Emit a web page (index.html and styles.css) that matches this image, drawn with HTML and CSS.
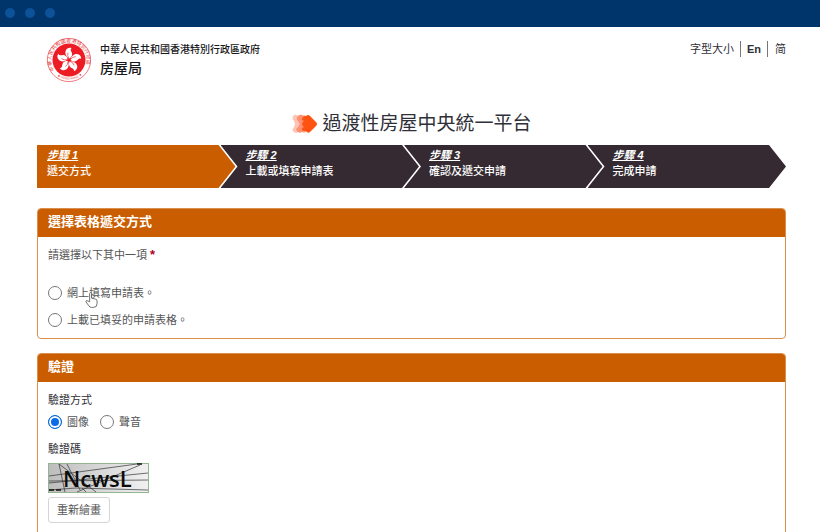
FILE: index.html
```html
<!DOCTYPE html>
<html lang="zh-Hant-HK">
<head>
<meta charset="utf-8">
<meta name="viewport" content="width=device-width, initial-scale=1">
<title>過渡性房屋中央統一平台</title>
<link rel="stylesheet" href="styles.css">
</head>
<body>
<div class="window">
  <div class="titlebar"><span class="dot"></span><span class="dot"></span><span class="dot"></span></div>
  <header class="header">
    <a class="brand" href="#">
      <svg class="emblem" viewBox="0 0 46 46" aria-hidden="true">
        <defs>
          <path id="ring-top" d="M8.500 33A17.600 17.600 0 1 1 37.500 33"/>
          <path id="ring-bottom" d="M9 37A20.500 20.500 0 0 0 37 37"/>
          <path id="petal" d="M23 21.500C20 20 18 17 19 13.800C19.800 11.500 22 10.200 24.500 10.800C23.400 12.200 23.800 13.300 24.800 14.800C26.400 17.200 25.600 20 23 21.500Z"/>
        </defs>
        <circle cx="23" cy="23" r="21.600" fill="#fff" stroke="#ee5b5e" stroke-width=".8"/>
        <text class="ring-text"><textPath href="#ring-top">中華人民共和國香港特別行政區</textPath></text>
        <text class="ring-text ring-latin"><textPath href="#ring-bottom" startOffset="3">★ HONG KONG ★</textPath></text>
        <circle cx="23" cy="23" r="16.500" fill="#ed1c24"/>
        <g fill="#fff">
          <use href="#petal" transform="rotate(5 23 23)"/>
          <use href="#petal" transform="rotate(77 23 23)"/>
          <use href="#petal" transform="rotate(149 23 23)"/>
          <use href="#petal" transform="rotate(221 23 23)"/>
          <use href="#petal" transform="rotate(293 23 23)"/>
        </g>
        <g fill="none" stroke="#ed1c24" stroke-width=".6">
          <path id="vein" d="M23 21.500Q20.800 18.500 22 15.500"/>
          <use href="#vein" transform="rotate(72 23 23)"/>
          <use href="#vein" transform="rotate(144 23 23)"/>
          <use href="#vein" transform="rotate(216 23 23)"/>
          <use href="#vein" transform="rotate(288 23 23)"/>
        </g>
      </svg>
      <span class="brand-text"><span class="government">中華人民共和國香港特別行政區政府</span><span class="bureau">房屋局</span></span>
    </a>
    <nav class="tools">
      <a href="#">字型大小</a><a class="lang-en" href="#">En</a><a href="#">简</a>
    </nav>
  </header>
  <main class="main">
    <h1 class="title">
      <svg class="title-icon" viewBox="0 0 26 20" aria-hidden="true">
        <path d="M3 1Q5 0 7 2L11 1Q13 0 15 2L18 6V14L15 18Q13 20 11 18L7 18Q5 20 3 18Q0 16 3 13L4 10L3 7Q0 4 3 1Z" fill="#ffc5b4"/>
        <path d="M8 1Q10 0 12 2L16 2Q18 1 20 3L23 10L19 17Q17 19 14 17L11 18Q8 20 6 17Q4 15 7 13L9 10L7 7Q4 4 8 1Z" fill="#ff9274"/>
        <path d="M15 2Q17 0 19 2L25 8Q27 10 25 12L19 18Q17 20 15 17Q11 18 11 14L13 13Q9 10 13 7L11 6Q11 2 15 2Z" fill="#ff5312"/>
      </svg>
      過渡性房屋中央統一平台
    </h1>
    <ol class="steps">
      <li class="step current"><span class="step-number">步驟 1</span><span>遞交方式</span></li>
      <li class="step"><span class="step-number">步驟 2</span><span>上載或填寫申請表</span></li>
      <li class="step"><span class="step-number">步驟 3</span><span>確認及遞交申請</span></li>
      <li class="step"><span class="step-number">步驟 4</span><span>完成申請</span></li>
    </ol>
    <section class="card">
      <h2 class="card-title">選擇表格遞交方式</h2>
      <fieldset class="card-body methods">
        <legend class="prompt">請選擇以下其中一項 <b class="required">*</b></legend>
        <label class="option hovered"><input type="radio" name="method">網上填寫申請表。
          <svg class="pointer" viewBox="0 0 14 18" aria-hidden="true"><path d="M5 11V2Q5 1 6 1T7 2V7L11 8Q13 8 13 10V13Q13 17 9 17H7Q5 17 4 15L1 11Q1 9 3 10Z" fill="#fff" stroke="#666" stroke-linejoin="round"/></svg>
        </label>
        <label class="option"><input type="radio" name="method">上載已填妥的申請表格。</label>
      </fieldset>
    </section>
    <section class="card">
      <h2 class="card-title">驗證</h2>
      <div class="card-body verify">
        <fieldset class="choices">
          <legend class="field-label">驗證方式</legend>
          <label class="option"><input type="radio" name="verify" checked>圖像</label>
          <label class="option"><input type="radio" name="verify">聲音</label>
        </fieldset>
        <div class="field-label">驗證碼</div>
        <svg class="captcha" viewBox="0 0 101 30" role="img" aria-label="NcwsL">
          <defs><linearGradient id="shade"><stop offset="0" stop-color="#bdbdbd"/><stop offset="1" stop-color="#f1f1f1"/></linearGradient></defs>
          <rect x=".5" y=".5" width="100" height="29" fill="url(#shade)" stroke="#91b691"/>
          <g fill="none" stroke="#333" stroke-width=".7">
            <path d="M1 13L89 1M1 20L100 10M1 18L100 17M1 27L28 25L100 27M11 1L17 29M19 1L32 27M11 1L48 29M29 29L92 2M34 25L38 29"/>
            <path d="M1 27H15M89 1H95" stroke="#111" stroke-width="1.500" stroke-dasharray="5 2"/>
          </g>
          <text class="captcha-text" x="15" y="24">NcwsL</text>
        </svg>
        <button class="redraw" type="button">重新繪畫</button>
      </div>
    </section>
  </main>
</div>
</body>
</html>
```
FILE: styles.css
```css
* { box-sizing: border-box; }
body {
  margin: 0;
  background: #fff;
  color: #303038;
  font: 11px/16px "Liberation Sans", "Noto Sans CJK TC", sans-serif;
}
a { color: inherit; text-decoration: none; }
.window { height: 100vh; overflow: hidden; }
.titlebar {
  display: flex;
  align-items: center;
  gap: 10px;
  height: 27px;
  padding: 0 5px 2px;
  background: #00356b;
}
.dot { width: 10px; height: 10px; border-radius: 50%; background: #0b5299; }
.header {
  display: flex;
  justify-content: space-between;
  align-items: flex-start;
  padding: 10px 34px 0 46px;
}
.brand { display: flex; gap: 8px; }
.emblem { width: 46px; height: 46px; }
.ring-text { fill: #e83a3e; font-size: 5px; }
.ring-latin { font-size: 3px; }
.brand-text { display: flex; flex-direction: column; padding-top: 5px; color: #18181c; }
.government { font-size: 10px; font-weight: 500; }
.bureau { font-size: 14px; line-height: 20px; font-weight: 500; }
.tools { display: flex; padding-top: 4px; }
.tools a { padding: 0 6px; }
.tools a + a { border-left: 1px solid #777; }
.tools a:last-child { padding: 0 0 0 7px; }
.lang-en { font-weight: bold; }
.main { padding: 0 34px 0 37px; }
.title {
  display: flex;
  justify-content: center;
  align-items: center;
  gap: 5px;
  margin: 27px 0 7px;
  font-size: 19px;
  line-height: 28px;
  font-weight: 400;
}
.title-icon { width: 26px; height: 20px; }
.steps {
  display: flex;
  margin: 0 0 20px;
  padding: 0;
  list-style: none;
}
.step {
  flex: 1 1 25%;
  display: flex;
  flex-direction: column;
  padding: 2px 20px 9px 25px;
  background: #352a31;
  color: #fff;
  font-weight: 500;
  clip-path: polygon(0 0, calc(100% - 17px) 0, 100% 50%, calc(100% - 17px) 100%, 0 100%, 17px 50%);
}
.step + .step { margin-left: -15px; }
.step.current {
  padding-left: 10px;
  background: #ca5d00;
  clip-path: polygon(0 0, calc(100% - 17px) 0, 100% 50%, calc(100% - 17px) 100%, 0 100%);
}
.step-number { font-weight: bold; font-style: italic; text-decoration: underline; }
.card {
  margin-bottom: 14px;
  border: 1px solid #d98f4d;
  border-radius: 4px;
  overflow: hidden;
}
.card-title {
  margin: 0;
  padding: 3px 10px 5px;
  background: #ca5d00;
  color: #fff;
  font-size: 13px;
  line-height: 20px;
  font-weight: 700;
}
.card-body { margin: 0; padding: 10px; border: 0; }
fieldset { min-width: 0; }
legend { padding: 0; }
.prompt { float: left; width: 100%; margin-bottom: 22px; color: #555; }
.required { color: #b00020; font-size: 13px; }
.methods .option { clear: both; width: max-content; }
.methods .option + .option { margin-top: 11px; }
.option { display: flex; align-items: center; gap: 5px; color: #555; }
.option input {
  appearance: none;
  width: 14px;
  height: 14px;
  margin: 0;
  border: 1px solid #777;
  border-radius: 50%;
  background: #fff;
}
.option input:checked {
  border-color: #0868d8;
  background: #0a6be8;
  box-shadow: inset 0 0 0 2px #fff;
}
.hovered { position: relative; }
.pointer { position: absolute; left: 37px; top: 6px; width: 13px; height: 18px; }
.verify { display: flex; flex-direction: column; align-items: flex-start; padding-bottom: 40px; }
.choices { display: flex; gap: 11px; margin: 0 0 11px; padding: 0; border: 0; }
.field-label { margin-bottom: 6px; }
.captcha { width: 101px; height: 30px; }
.captcha-text { fill: #0b0b0b; font: 600 22px "Open Sans", sans-serif; }
.redraw {
  margin-top: 4px;
  padding: 4px 8px;
  border: 1px solid #d4d4d4;
  border-radius: 3px;
  background: #fff;
  color: #555;
  font: inherit;
}
```
